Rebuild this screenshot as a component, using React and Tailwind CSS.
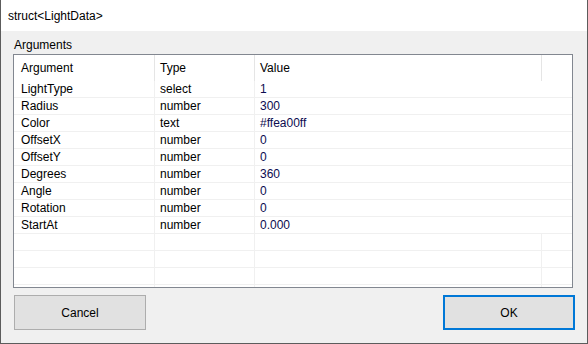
import React from 'react';

const rows = [
    ['LightType', 'select', '1'],
    ['Radius', 'number', '300'],
    ['Color', 'text', '#ffea00ff'],
    ['OffsetX', 'number', '0'],
    ['OffsetY', 'number', '0'],
    ['Degrees', 'number', '360'],
    ['Angle', 'number', '0'],
    ['Rotation', 'number', '0'],
    ['StartAt', 'number', '0.000'],
];

const App = () => {
    return (
        <div
            className="w-[588px] h-[344px] flex flex-col border-x border-b border-[#5c5c5c] bg-[#f0f0f0] text-[12px] text-black overflow-hidden"
            style={{ fontFamily: '"Liberation Sans", Arial, sans-serif' }}
        >
            {/* Title bar */}
            <div className="h-[31px] shrink-0 bg-white flex items-center pl-[7px]">
                <span className="text-[12px]">struct&lt;LightData&gt;</span>
            </div>

            {/* Body */}
            <div className="flex-1 flex flex-col px-[12px]">
                <div className="mt-[6px] h-[17px] leading-[17px] pl-[1px]">Arguments</div>

                {/* Grid */}
                <div className="w-[560px] h-[234px] border border-[#828790] bg-white flex flex-col overflow-hidden">
                    {/* Header */}
                    <div className="h-[26px] shrink-0 flex">
                        <div className="w-[141px] flex items-center pl-[7px] border-r border-[#e5e5e5]">Argument</div>
                        <div className="w-[100px] flex items-center pl-[5px] border-r border-[#e5e5e5]">Type</div>
                        <div className="w-[287px] flex items-center pl-[5px] border-r border-[#e5e5e5]">Value</div>
                        <div className="flex-1" />
                    </div>

                    {rows.map(([name, type, value]) => (
                        <div key={name} className="h-[17px] shrink-0 flex border-b border-[#f0f0f0] leading-[16px]">
                            <div className="w-[141px] pl-[7px] border-r border-[#f0f0f0]">{name}</div>
                            <div className="w-[100px] pl-[5px] border-r border-[#f0f0f0]">{type}</div>
                            <div className="flex-1 pl-[5px] text-[#0c0c50]">{value}</div>
                        </div>
                    ))}

                    {[0, 1, 2, 3].map((i) => (
                        <div key={i} className="h-[17px] shrink-0 flex border-b border-[#f0f0f0]">
                            <div className="w-[141px] border-r border-[#f0f0f0]" />
                            <div className="w-[100px] border-r border-[#f0f0f0]" />
                            <div className="w-[287px] border-r border-[#f0f0f0]" />
                            <div className="flex-1" />
                        </div>
                    ))}
                </div>

                {/* Buttons */}
                <div className="mt-[7px] flex justify-between pl-[1px]">
                    <button className="w-[132px] h-[35px] bg-[#e1e1e1] border border-[#adadad] text-black">
                        Cancel
                    </button>
                    <button className="w-[132px] h-[35px] bg-[#e1e1e1] border-2 border-[#0078d7] text-black">
                        OK
                    </button>
                </div>
            </div>
        </div>
    );
};

export default App;
